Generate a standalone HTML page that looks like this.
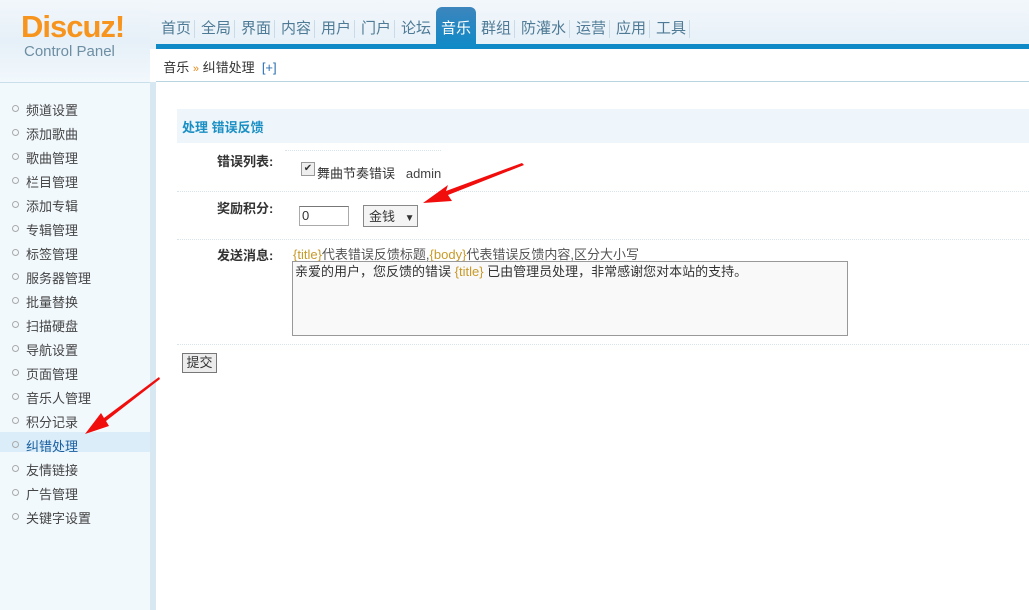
<!DOCTYPE html>
<html><head><meta charset="utf-8"><style>
body{margin:0;width:1029px;height:610px;overflow:hidden;background:#fff;font-family:"Liberation Sans","Noto Sans CJK SC",sans-serif;font-size:12px;color:#333;position:relative}
#hd{position:absolute;left:0;top:0;width:1029px;height:49px;background:linear-gradient(#f2f7fb,#e6f0f8)}
#logo{position:absolute;left:21px;top:10px;font-size:31px;font-weight:bold;color:#f7941d;letter-spacing:-1px;line-height:34px}
#cp{position:absolute;left:24px;top:43px;font-size:15px;color:#6d8ea3}
#nav{position:absolute;left:156px;top:44px;width:873px;height:5px;background:#0f8ac7}
.n{position:absolute;top:18px;font-size:15px;color:#4e7a95;line-height:22px}
.n i{position:absolute;right:-4px;top:2px;width:1px;height:18px;background:#c9dbe6}
#cur{position:absolute;left:436px;top:7px;width:40px;height:40px;background:linear-gradient(#3d85bd,#0f8ac7);border-radius:6px 6px 0 0;color:#fff;font-size:15px;text-align:center;line-height:44px}
#side{position:absolute;left:0;top:49px;width:150px;height:561px;background:#f2f9fd}
#sb{position:absolute;left:150px;top:82px;width:6px;height:528px;background:#d7e8f3}
#lg{position:absolute;left:0;top:0;width:150px;height:82px;background:linear-gradient(#f2f7fb,#e6f0f8 50%,#f2f8fc)}
#bc{position:absolute;left:156px;top:49px;width:873px;height:32px;border-bottom:1px solid #b8d4e0;font-size:13px;line-height:38px;background:#fff}
.m{position:absolute;left:26px;font-size:13px;color:#444}
.m:before{content:"";position:absolute;left:-14px;top:5px;width:5px;height:5px;border:1px solid #aaa;border-radius:50%}
#tt{position:absolute;left:177px;top:109px;width:852px;height:34px;background:#eef6fc;color:#1a8fc4;font-weight:bold;font-size:13px;line-height:38px;text-indent:5px}
.lb{position:absolute;left:217px;font-weight:bold;font-size:13px;color:#333}
.hr{position:absolute;left:177px;width:852px;border-top:1px dotted #d7e4ec}
</style></head><body>
<div id="hd"></div>
<div id="side"></div><div id="lg"></div><div id="sb"></div>
<div id="logo">Discuz!</div><div id="cp">Control Panel</div>
<div id="nav"></div>
<div class="n" style="left:161px">首页<i></i></div>
<div class="n" style="left:201px">全局<i></i></div>
<div class="n" style="left:241px">界面<i></i></div>
<div class="n" style="left:281px">内容<i></i></div>
<div class="n" style="left:321px">用户<i></i></div>
<div class="n" style="left:361px">门户<i></i></div>
<div class="n" style="left:401px">论坛</div>
<div id="cur">音乐</div>
<div class="n" style="left:481px">群组<i></i></div>
<div class="n" style="left:521px">防灌水<i></i></div>
<div class="n" style="left:576px">运营<i></i></div>
<div class="n" style="left:616px">应用<i></i></div>
<div class="n" style="left:656px">工具<i></i></div>
<div style="position:absolute;left:0;top:82px;width:150px;height:1px;background:#c9dfea"></div>
<div id="bc">&nbsp;&nbsp;音乐 <span style="color:#e78a1a;font-size:11px">»</span> 纠错处理 &nbsp;<span style="color:#2a6fb0">[+]</span></div>
<div style="position:absolute;left:0;top:432px;width:150px;height:20px;background:#dbedf8"></div>
<div class="m" style="top:100px">频道设置</div>
<div class="m" style="top:124px">添加歌曲</div>
<div class="m" style="top:148px">歌曲管理</div>
<div class="m" style="top:172px">栏目管理</div>
<div class="m" style="top:196px">添加专辑</div>
<div class="m" style="top:220px">专辑管理</div>
<div class="m" style="top:244px">标签管理</div>
<div class="m" style="top:268px">服务器管理</div>
<div class="m" style="top:292px">批量替换</div>
<div class="m" style="top:316px">扫描硬盘</div>
<div class="m" style="top:340px">导航设置</div>
<div class="m" style="top:364px">页面管理</div>
<div class="m" style="top:388px">音乐人管理</div>
<div class="m" style="top:412px">积分记录</div>
<div class="m" style="top:436px;color:#1a5fa0">纠错处理</div>
<div class="m" style="top:460px">友情链接</div>
<div class="m" style="top:484px">广告管理</div>
<div class="m" style="top:508px">关键字设置</div>
<div id="tt">处理 错误反馈</div>
<div class="lb" style="top:151px">错误列表:</div>
<div style="position:absolute;left:285px;top:150px;width:156px;border-top:1px dotted #d7e4ec"></div>
<div style="position:absolute;left:301px;top:162px;width:12px;height:12px;border:1px solid #999;background:#eee;font-size:10px;line-height:12px;text-align:center">✔</div>
<div style="position:absolute;left:317px;top:163px;font-size:13px">舞曲节奏错误 &nbsp; <span style="color:#444">admin</span></div>
<div class="hr" style="top:191px"></div>
<div class="lb" style="top:198px">奖励积分:</div>
<div style="position:absolute;left:299px;top:206px;width:48px;height:18px;border:1px solid #aaa;border-top-color:#777;font-size:13px;line-height:18px;text-indent:2px">0</div>
<div style="position:absolute;left:363px;top:205px;width:53px;height:20px;border:1px solid #888;background:#f4f4f4;font-size:13px;line-height:21px;text-indent:5px">金钱 <span style="font-size:10px;margin-left:6px">▼</span></div>
<div class="hr" style="top:239px"></div>
<div class="lb" style="top:245px">发送消息:</div>
<div style="position:absolute;left:293px;top:244px;font-size:13px;color:#555"><span style="color:#c89a28">{title}</span>代表错误反馈标题,<span style="color:#c89a28">{body}</span>代表错误反馈内容,区分大小写</div>
<div style="position:absolute;left:292px;top:261px;width:552px;height:73px;border:1px solid #999;background:#f9f9f9;font-size:13px;line-height:20px;padding-left:2px">亲爱的用户，您反馈的错误 <span style="color:#c89a28">{title}</span> 已由管理员处理，非常感谢您对本站的支持。</div>
<div class="hr" style="top:344px"></div>
<div style="position:absolute;left:182px;top:353px;width:33px;height:18px;border:1px solid #777;background:#ececec;font-size:13px;text-align:center;line-height:18px">提交</div>
<svg style="position:absolute;left:0;top:0" width="1029" height="610">
<polygon points="522,163 446,191 448,185 423,203 452,201 448,195 524,165" fill="#f20d0d"/>
<polygon points="159,377 104,418 101,413 85,434 109,426 106,421 160,379" fill="#f20d0d"/>
</svg>
</body></html>
